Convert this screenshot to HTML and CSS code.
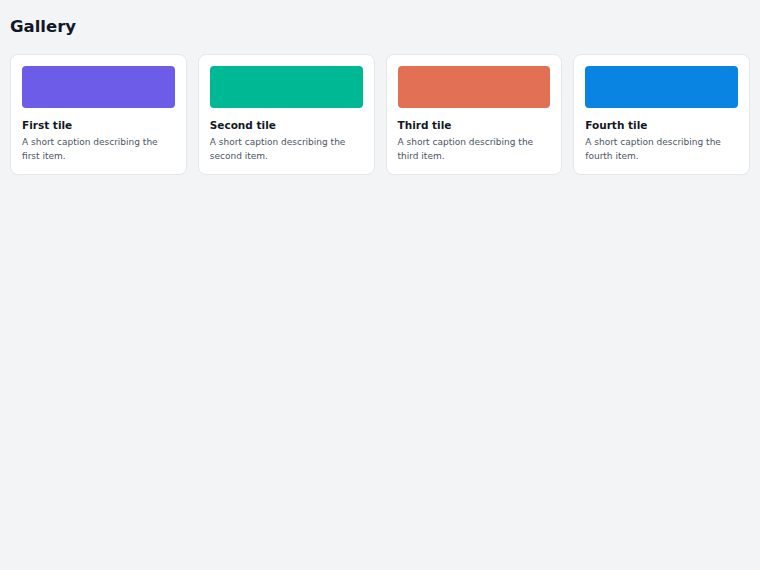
FILE: index.html
```html
<!DOCTYPE html>
<html lang="en">
<head>
    <meta charset="UTF-8">
    <meta name="viewport" content="width=device-width, initial-scale=1.0">
    <title>Gallery</title>
    <link rel="stylesheet" href="styles.css">
</head>
<body>
    <h1>Gallery</h1>

    <div class="gallery">
        <div class="tile">
            <div class="swatch purple"></div>
            <div class="tile-title">First tile</div>
            <p class="tile-caption">A short caption describing the first item.</p>
        </div>
        <div class="tile">
            <div class="swatch green"></div>
            <div class="tile-title">Second tile</div>
            <p class="tile-caption">A short caption describing the second item.</p>
        </div>
        <div class="tile">
            <div class="swatch orange"></div>
            <div class="tile-title">Third tile</div>
            <p class="tile-caption">A short caption describing the third item.</p>
        </div>
        <div class="tile">
            <div class="swatch blue"></div>
            <div class="tile-title">Fourth tile</div>
            <p class="tile-caption">A short caption describing the fourth item.</p>
        </div>
    </div>
</body>
</html>
```

FILE: styles.css
```css
* {
    margin: 0;
    padding: 0;
    box-sizing: border-box;
}

body {
    font-family: "DejaVu Sans", sans-serif;
    background: #f3f4f6;
    color: #111827;
    padding: 10px;
}

h1 {
    font-size: 16.5px;
    font-weight: bold;
    line-height: 20px;
    margin: 7px 0 17px;
}

.gallery {
    display: grid;
    grid-template-columns: repeat(4, 1fr);
    gap: 11px;
}

.tile {
    background: #fff;
    border: 1px solid #e5e7eb;
    border-radius: 8px;
    padding: 11px;
}

.swatch {
    height: 42px;
    border-radius: 4px;
    margin-bottom: 10px;
}

.purple { background: #6c5ce7; }
.green { background: #00b894; }
.orange { background: #e17055; }
.blue { background: #0984e3; }

.tile-title {
    font-size: 10.5px;
    font-weight: bold;
    line-height: 14px;
}

.tile-caption {
    font-size: 9px;
    line-height: 13.5px;
    color: #4b5563;
    margin-top: 4px;
}
```
